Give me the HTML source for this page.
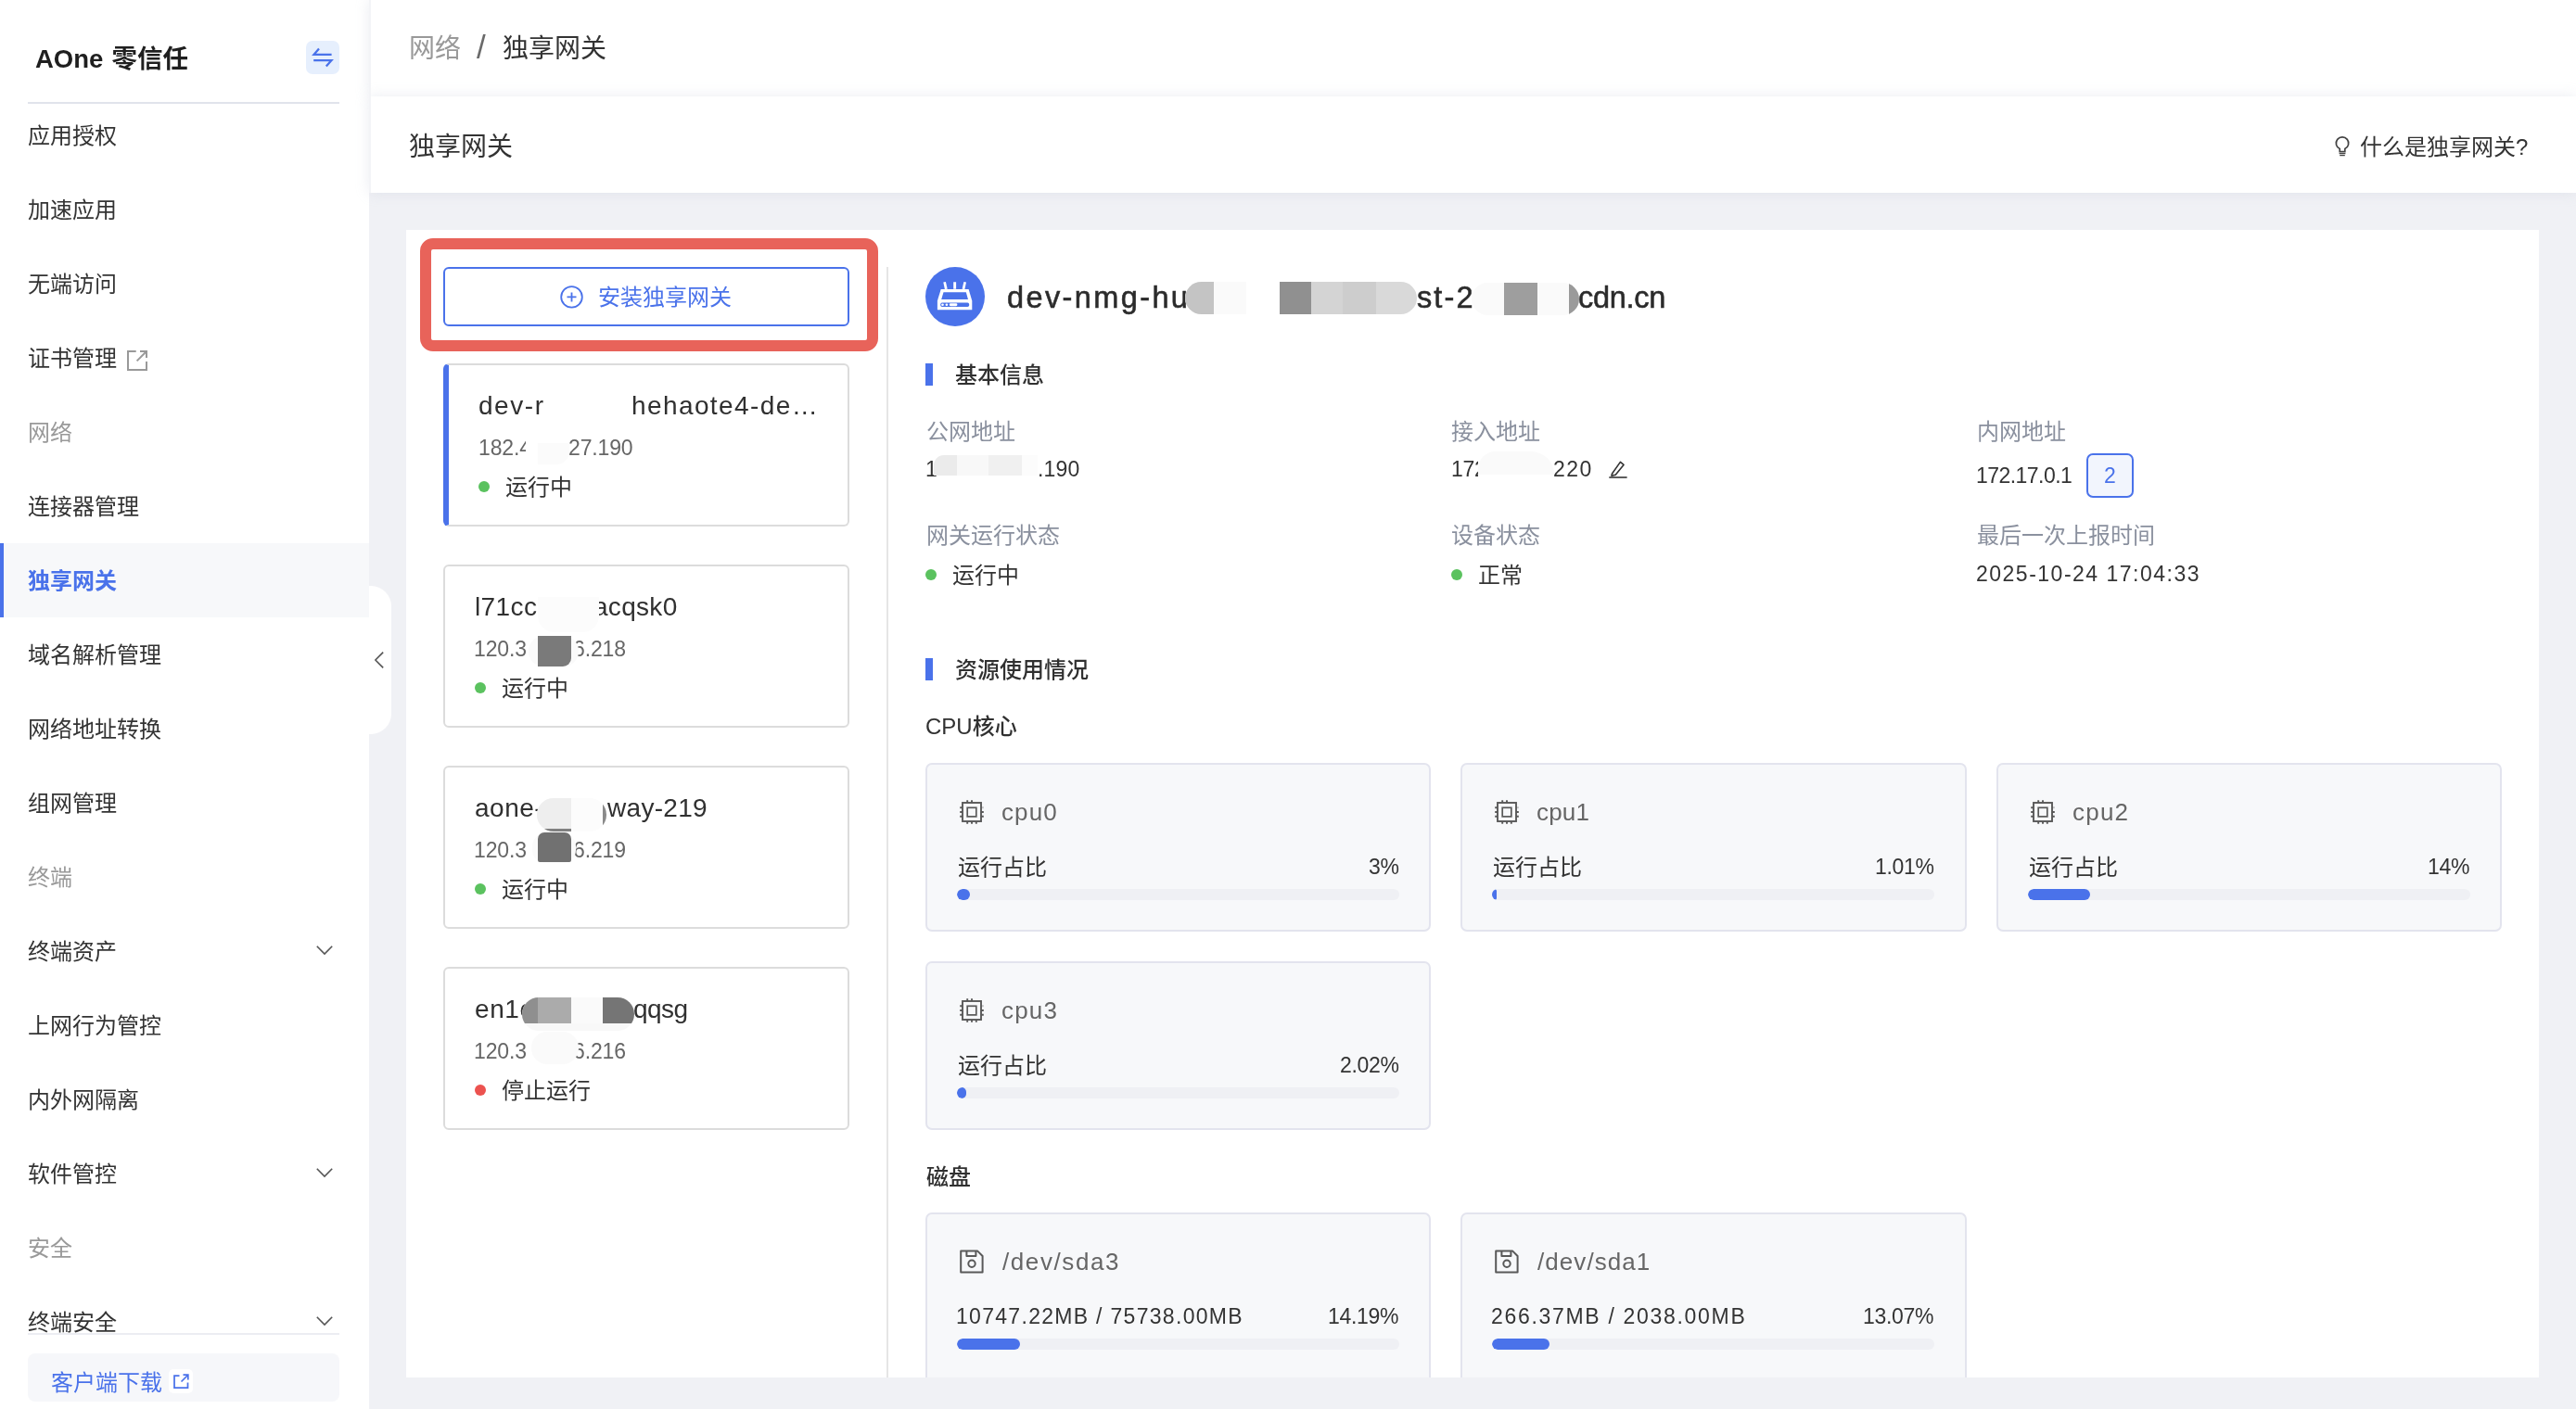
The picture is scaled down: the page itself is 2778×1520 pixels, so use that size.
<!DOCTYPE html>
<html lang="zh-CN"><head><meta charset="utf-8"><title>独享网关</title><style>
*{box-sizing:border-box;margin:0;padding:0}
html,body{width:2778px;height:1520px;overflow:hidden;background:#f0f1f5}
body{position:relative;font-family:"Liberation Sans","Noto Sans CJK SC",sans-serif;color:#333}
.t{position:absolute;white-space:nowrap;will-change:transform}
.b{position:absolute}
svg{position:absolute;overflow:visible}
</style></head><body>
<div class="b" style="left:438px;top:248px;width:2300px;height:1238px;background:#fff;"></div>
<div class="b" style="left:0px;top:0px;width:398px;height:1520px;background:#fff;"></div>
<div class="t" style="left:38px;top:44px;height:40px;line-height:40px;font-size:27.5px;color:#1f1f1f;font-weight:700;word-spacing:1.5px;">AOne 零信任</div>
<div class="b" style="left:330px;top:44px;width:36px;height:36px;background:#e6effd;border-radius:7px;"></div>
<svg style="left:330px;top:44px" width="36" height="36" viewBox="0 0 36 36" fill="none" stroke="#4a72ea" stroke-width="2.3" stroke-linejoin="miter"><path d="M27.6 14.8H8.6L14 8.6"/><path d="M8.2 21.2H27.4L21.8 27.6"/></svg>
<div class="b" style="left:30px;top:110px;width:336px;height:2px;background:#e1e3eb;"></div>
<div class="b" style="left:0px;top:586px;width:398px;height:80px;background:#f7f8fa;"></div>
<div class="b" style="left:0px;top:586px;width:4px;height:80px;background:#4a72ea;"></div>
<div class="t" style="left:30.4px;top:127.45px;height:40px;line-height:40px;font-size:24px;color:#333;">应用授权</div>
<div class="t" style="left:30.4px;top:207.45px;height:40px;line-height:40px;font-size:24px;color:#333;">加速应用</div>
<div class="t" style="left:30.4px;top:287.45px;height:40px;line-height:40px;font-size:24px;color:#333;">无端访问</div>
<div class="t" style="left:30.4px;top:367.45px;height:40px;line-height:40px;font-size:24px;color:#333;">证书管理</div>
<div class="t" style="left:30.4px;top:447.45px;height:40px;line-height:40px;font-size:24px;color:#999;">网络</div>
<div class="t" style="left:30.4px;top:527.45px;height:40px;line-height:40px;font-size:24px;color:#333;">连接器管理</div>
<div class="t" style="left:30.4px;top:607.45px;height:40px;line-height:40px;font-size:24px;color:#4a72ea;font-weight:700;">独享网关</div>
<div class="t" style="left:30.4px;top:687.45px;height:40px;line-height:40px;font-size:24px;color:#333;">域名解析管理</div>
<div class="t" style="left:30.4px;top:767.45px;height:40px;line-height:40px;font-size:24px;color:#333;">网络地址转换</div>
<div class="t" style="left:30.4px;top:847.45px;height:40px;line-height:40px;font-size:24px;color:#333;">组网管理</div>
<div class="t" style="left:30.4px;top:927.45px;height:40px;line-height:40px;font-size:24px;color:#999;">终端</div>
<div class="t" style="left:30.4px;top:1007.45px;height:40px;line-height:40px;font-size:24px;color:#333;">终端资产</div>
<svg style="left:341.4px;top:1020.15px" width="18" height="10" viewBox="0 0 18 10" fill="none" stroke="#555" stroke-width="1.6"><path d="M0.8 0.8L9 9L17.2 0.8"/></svg>
<div class="t" style="left:30.4px;top:1087.45px;height:40px;line-height:40px;font-size:24px;color:#333;">上网行为管控</div>
<div class="t" style="left:30.4px;top:1167.45px;height:40px;line-height:40px;font-size:24px;color:#333;">内外网隔离</div>
<div class="t" style="left:30.4px;top:1247.45px;height:40px;line-height:40px;font-size:24px;color:#333;">软件管控</div>
<svg style="left:341.4px;top:1260.15px" width="18" height="10" viewBox="0 0 18 10" fill="none" stroke="#555" stroke-width="1.6"><path d="M0.8 0.8L9 9L17.2 0.8"/></svg>
<div class="t" style="left:30.4px;top:1327.45px;height:40px;line-height:40px;font-size:24px;color:#999;">安全</div>
<div class="t" style="left:30.4px;top:1407.45px;height:40px;line-height:40px;font-size:24px;color:#333;">终端安全</div>
<svg style="left:341.4px;top:1420.15px" width="18" height="10" viewBox="0 0 18 10" fill="none" stroke="#555" stroke-width="1.6"><path d="M0.8 0.8L9 9L17.2 0.8"/></svg>
<svg style="left:137px;top:378px" width="22" height="22" viewBox="0 0 22 22" fill="none" stroke="#999" stroke-width="2"><path d="M9.7 1H1V21H21V12"/><path d="M14 1H21V8"/><path d="M21 1L10.6 11.4"/></svg>
<div class="b" style="left:0px;top:1438px;width:382px;height:82px;background:#fff;"></div>
<div class="b" style="left:30px;top:1438px;width:336px;height:2px;background:#ecedf2;"></div>
<div class="b" style="left:30px;top:1460px;width:336px;height:52px;background:#f6f7fa;border-radius:8px;"></div>
<div class="t" style="left:55px;top:1471.7px;height:40px;line-height:40px;font-size:24px;color:#4a72ea;">客户端下载</div>
<div class="b" style="left:182px;top:1477px;width:26px;height:26px;background:#fff;border-radius:5px;"></div>
<svg style="left:187px;top:1482px" width="17" height="16" viewBox="0 0 17 16" fill="none" stroke="#4a72ea" stroke-width="1.75"><path d="M6.5 2H1V15H15.5V9.5"/><path d="M10.5 1.2H15.8V6.5"/><path d="M15.5 1.5L8.5 8.5"/></svg>
<div class="b" style="left:398px;top:632px;width:24px;height:160px;background:#fff;border-radius:0 22px 22px 0;"></div>
<svg style="left:404px;top:703px" width="10" height="18" viewBox="0 0 10 18" fill="none" stroke="#555" stroke-width="1.6"><path d="M9.2 0.6L0.9 9L9.2 17.4"/></svg>
<div class="b" style="left:398px;top:0px;width:2380px;height:104px;background:#fff;box-shadow:0 0 14px rgba(170,178,200,0.24);"></div>
<div class="b" style="left:398px;top:104px;width:2380px;height:104px;background:#fff;box-shadow:0 0 14px rgba(170,178,200,0.24);"></div>
<div class="b" style="left:398px;top:0px;width:2px;height:208px;background:#f3f4f7;"></div>
<div class="t" style="left:440.6px;top:33.4px;height:40px;line-height:40px;font-size:28px;color:#999;">网络</div>
<div class="t" style="left:513.5px;top:27.47px;height:48px;line-height:48px;font-size:35px;color:#6a6a6a;">/</div>
<div class="t" style="left:542.3px;top:33.4px;height:40px;line-height:40px;font-size:28px;color:#333;">独享网关</div>
<div class="t" style="left:440.6px;top:139px;height:40px;line-height:40px;font-size:28px;color:#333;">独享网关</div>
<div class="t" style="right:51.7px;top:138.5px;height:40px;line-height:40px;font-size:24px;color:#333;">什么是独享网关?</div>
<svg style="left:2517px;top:146px" width="18" height="24" viewBox="0 0 18 24" fill="none" stroke="#444" stroke-width="1.7"><path d="M6.2 17.6V14.6A6.7 6.7 0 1 1 11.8 14.6V17.6Z"/><path d="M5.6 19.7H12.4M6.2 21.7H11.8" stroke-width="1.3"/></svg>
<div class="b" style="left:453px;top:257px;width:494px;height:122.4px;border:12px solid #e8635a;border-radius:14px;"></div>
<div class="b" style="left:478px;top:288px;width:438px;height:64px;border:2px solid #4a72ea;border-radius:6px;background:#fff;"></div>
<svg style="left:604.2px;top:308px" width="25" height="25" viewBox="0 0 25 25" fill="none" stroke="#4a72ea" stroke-width="1.8"><circle cx="12.5" cy="12.4" r="11.3"/><path d="M12.5 7.4V17.4M7.5 12.4H17.5"/></svg>
<div class="t" style="left:645.2px;top:300.7px;height:40px;line-height:40px;font-size:24px;color:#4a72ea;">安装独享网关</div>
<div class="b" style="left:956px;top:288px;width:2px;height:1198px;background:#e5e5e5;"></div>
<div class="b" style="left:478px;top:392px;width:438px;height:176px;border:2px solid #dcdcdc;border-left:6px solid #4a72ea;border-radius:6px;background:#fff;"></div>
<div class="b" style="left:478px;top:609px;width:438px;height:176px;border:2px solid #dcdcdc;border-radius:6px;background:#fff;"></div>
<div class="b" style="left:478px;top:826px;width:438px;height:176px;border:2px solid #dcdcdc;border-radius:6px;background:#fff;"></div>
<div class="b" style="left:478px;top:1043px;width:438px;height:176px;border:2px solid #dcdcdc;border-radius:6px;background:#fff;"></div>
<div class="t" style="left:515.62px;top:418.3px;height:40px;line-height:40px;font-size:28px;color:#303030;letter-spacing:1.54px;">dev-r</div>
<div class="t" style="left:681.27px;top:418.3px;height:40px;line-height:40px;font-size:28px;color:#303030;letter-spacing:1.4px;">hehaote4-de…</div>
<div class="t" style="left:612.65px;top:463.03px;height:40px;line-height:40px;font-size:23px;color:#666;letter-spacing:-0.14px;">27.190</div>
<div class="t" style="left:516.15px;top:463.03px;height:40px;line-height:40px;font-size:23px;color:#666;letter-spacing:-0.14px;">182.4</div>
<div class="b" style="left:566.5px;top:473px;width:14px;height:20px;background:#fff;border-radius:0;"></div>
<div class="b" style="left:580px;top:477.5px;width:34px;height:23.5px;background:#fbfbfb;border-radius:0 0 14px 0;"></div>
<div class="b" style="left:516px;top:519px;width:12.2px;height:12.2px;background:#5bc25f;border-radius:50%;"></div>
<div class="t" style="left:544.6px;top:505.7px;height:40px;line-height:40px;font-size:24px;color:#333;">运行中</div>
<div class="t" style="left:511.82px;top:635.4px;height:40px;line-height:40px;font-size:28px;color:#303030;letter-spacing:0.4px;">l71cc</div>
<div class="t" style="left:639.89px;top:635.4px;height:40px;line-height:40px;font-size:28px;color:#303030;letter-spacing:0.3px;">acqsk0</div>
<div class="t" style="left:511.45px;top:680.03px;height:40px;line-height:40px;font-size:23px;color:#666;letter-spacing:-0.14px;">120.3</div>
<div class="t" style="left:617.99px;top:680.03px;height:40px;line-height:40px;font-size:23px;color:#666;letter-spacing:-0.14px;">6.218</div>
<div class="b" style="left:580px;top:644px;width:66px;height:38px;background:#fcfcfc;border-radius:0 0 18px 18px;"></div>
<div class="b" style="left:570px;top:686px;width:54px;height:33px;background:#fafafa;border-radius:16px;"></div>
<div class="b" style="left:580px;top:686px;width:36.2px;height:32.6px;background:#7a7a7a;border-radius:0 0 9px 0;"></div>
<div class="b" style="left:512px;top:736px;width:12.2px;height:12.2px;background:#5bc25f;border-radius:50%;"></div>
<div class="t" style="left:540.6px;top:722.7px;height:40px;line-height:40px;font-size:24px;color:#333;">运行中</div>
<div class="t" style="left:512.02px;top:852.3px;height:40px;line-height:40px;font-size:28px;color:#303030;letter-spacing:0.5px;">aone-</div>
<div class="t" style="left:654.56px;top:852.3px;height:40px;line-height:40px;font-size:28px;color:#303030;letter-spacing:0.3px;">way-219</div>
<div class="t" style="left:511.45px;top:897.03px;height:40px;line-height:40px;font-size:23px;color:#666;letter-spacing:-0.14px;">120.3</div>
<div class="t" style="left:618.08px;top:897.03px;height:40px;line-height:40px;font-size:23px;color:#666;letter-spacing:-0.14px;">6.219</div>
<div class="b" style="left:579.2px;top:861px;width:75.3px;height:35.7px;border-radius:18px;overflow:hidden;background:#fcfcfc;"><div style="position:absolute;left:0;top:0;width:36.5px;height:36px;background:#eee"></div><div style="position:absolute;left:8px;top:33px;width:28.5px;height:3px;background:#808080"></div><div style="position:absolute;left:70.6px;top:0;width:5px;height:36px;background:#8a8a8a"></div></div>
<div class="b" style="left:574px;top:899px;width:47px;height:32px;background:#fbfbfb;border-radius:14px;"></div>
<div class="b" style="left:580px;top:898.2px;width:36.2px;height:31.8px;background:#717171;border-radius:7px 7px 2px 2px;"></div>
<div class="b" style="left:512px;top:953px;width:12.2px;height:12.2px;background:#5bc25f;border-radius:50%;"></div>
<div class="t" style="left:540.6px;top:939.7px;height:40px;line-height:40px;font-size:24px;color:#333;">运行中</div>
<div class="t" style="left:511.52px;top:1069.3px;height:40px;line-height:40px;font-size:28px;color:#303030;letter-spacing:0.6px;">en1c</div>
<div class="t" style="left:682.82px;top:1069.3px;height:40px;line-height:40px;font-size:28px;color:#303030;letter-spacing:-0.58px;">qqsg</div>
<div class="t" style="left:511.45px;top:1114.03px;height:40px;line-height:40px;font-size:23px;color:#666;letter-spacing:-0.14px;">120.3</div>
<div class="t" style="left:618.02px;top:1114.03px;height:40px;line-height:40px;font-size:23px;color:#666;letter-spacing:-0.14px;">6.216</div>
<div class="b" style="left:562.9px;top:1075.8px;width:121.1px;height:36px;border-radius:18px;overflow:hidden;background:#f8f8f8;"><div style="position:absolute;left:0;top:0;width:17.1px;height:28.2px;background:#8f8f8f"></div><div style="position:absolute;left:17.1px;top:0;width:35.7px;height:28.2px;background:#ababab"></div><div style="position:absolute;left:52.8px;top:0;width:34.1px;height:28.2px;background:#fafafa"></div><div style="position:absolute;left:86.9px;top:0;width:34.3px;height:28.2px;background:#757575"></div></div>
<div class="b" style="left:573px;top:1112.6px;width:51px;height:35px;background:#fafafa;border-radius:17px;"></div>
<div class="b" style="left:512px;top:1170px;width:12.2px;height:12.2px;background:#ec524f;border-radius:50%;"></div>
<div class="t" style="left:540.6px;top:1156.7px;height:40px;line-height:40px;font-size:24px;color:#333;">停止运行</div>
<div class="b" style="left:998.2px;top:288px;width:64px;height:64px;background:#4a72ea;border-radius:50%;"></div>
<svg style="left:998.2px;top:288px" width="64" height="64" viewBox="0 0 64 64"><g fill="#fff"><path d="M16.7 24H46.6L50.3 36.5V46.2H12.9V36.5Z"/><path d="M19.3 16.6l2.6-.5 1.8 7.6-2.8.4z"/><path d="M30.2 16.2h2.9v7.6h-2.9z"/><path d="M41.4 16.1l2.6.5-1.6 7.5-2.8-.4z"/></g><g fill="#4a72ea"><path d="M19.5 27.2H43.8L46 34.9H17.2Z"/><rect x="16.3" y="38.6" width="30.8" height="4.3" rx="1.6"/></g><g fill="#fff"><circle cx="18.5" cy="40.75" r="1.35"/><circle cx="22.9" cy="40.75" r="1.35"/><rect x="25.8" y="39.3" width="8.6" height="2.9" rx="1.4"/></g></svg>
<div class="t" style="left:1085.63px;top:297.34px;height:48px;line-height:48px;font-size:32.5px;color:#2b2b2b;letter-spacing:2.39px;-webkit-text-stroke:0.55px #2b2b2b;">dev-nmg-hu</div>
<div class="t" style="left:1527.59px;top:297.34px;height:48px;line-height:48px;font-size:32.5px;color:#2b2b2b;letter-spacing:2.12px;-webkit-text-stroke:0.55px #2b2b2b;">st-2</div>
<div class="t" style="left:1702.13px;top:297.34px;height:48px;line-height:48px;font-size:32.5px;color:#2b2b2b;letter-spacing:-0.31px;-webkit-text-stroke:0.55px #2b2b2b;">cdn.cn</div>
<div class="b" style="left:1278.4px;top:303.6px;width:65.2px;height:35px;border-radius:17.5px 0 0 17.5px;overflow:hidden;background:#fafafa;"><div style="position:absolute;left:0;top:0;width:31px;height:35px;background:#c4c4c4"></div></div>
<div class="b" style="left:1380px;top:303.6px;width:148px;height:35px;border-radius:0 17.5px 17.5px 0;overflow:hidden;background:#d9d9d9;"><div style="position:absolute;left:0;top:0;width:34px;height:35px;background:#909090"></div><div style="position:absolute;left:34px;top:0;width:34px;height:35px;background:#d4d4d4"></div><div style="position:absolute;left:68px;top:0;width:36px;height:35px;background:#cdcdcd"></div></div>
<div class="b" style="left:1586.5px;top:305px;width:116.5px;height:35px;border-radius:17.5px;overflow:hidden;background:#fafafa;"><div style="position:absolute;left:35.5px;top:0;width:36px;height:35px;background:#9e9e9e"></div><div style="position:absolute;left:105.5px;top:0;width:11px;height:35px;background:#9a9a9a"></div></div>
<div class="b" style="left:998px;top:392px;width:7.8px;height:23.8px;background:#4a72ea;"></div>
<div class="t" style="left:1030.4px;top:384.5px;height:40px;line-height:40px;font-size:24px;color:#303030;font-weight:500;">基本信息</div>
<div class="t" style="left:998.5px;top:445.6px;height:40px;line-height:40px;font-size:24px;color:#8a909e;">公网地址</div>
<div class="t" style="left:1564.7px;top:445.5px;height:40px;line-height:40px;font-size:24px;color:#8a909e;">接入地址</div>
<div class="t" style="left:2132.2px;top:445.5px;height:40px;line-height:40px;font-size:24px;color:#8a909e;">内网地址</div>
<div class="t" style="left:997.75px;top:485.93px;height:40px;line-height:40px;font-size:23px;color:#333;">1</div>
<div class="t" style="left:1119.11px;top:485.93px;height:40px;line-height:40px;font-size:23px;color:#333;letter-spacing:0.21px;">.190</div>
<div class="b" style="left:1006.8px;top:491px;width:112.2px;height:21.5px;border-radius:11px 0 0 0;overflow:hidden;background:#fcfcfc;"><div style="position:absolute;left:0;top:0;width:25.2px;height:22px;background:#ebebeb"></div><div style="position:absolute;left:25.2px;top:0;width:34.1px;height:22px;background:#f8f8f8"></div><div style="position:absolute;left:59.3px;top:0;width:36px;height:22px;background:#f0f0f0"></div></div>
<div class="t" style="left:1564.55px;top:485.83px;height:40px;line-height:40px;font-size:23px;color:#333;letter-spacing:-0.35px;">172</div>
<div class="t" style="left:1675.45px;top:485.83px;height:40px;line-height:40px;font-size:23px;color:#333;letter-spacing:1.44px;">220</div>
<div class="b" style="left:1594.3px;top:487.4px;width:81.5px;height:28px;background:#fff;"></div>
<div class="b" style="left:1594.3px;top:487.4px;width:81.5px;height:25px;border-radius:24px 32px 0 0;background:#fafafa;"></div>
<svg style="left:1735px;top:496.5px" width="20" height="20" viewBox="0 0 20 20" fill="none" stroke="#333" stroke-width="1.6" stroke-linejoin="round"><path d="M3.5 14L12.4 1.4L16 4.4L7.2 15.2L2.9 16.1Z"/><path d="M0.3 18H19.6"/></svg>
<div class="t" style="left:2130.75px;top:493.03px;height:40px;line-height:40px;font-size:23px;color:#333;letter-spacing:-0.55px;">172.17.0.1</div>
<div class="b" style="left:2250.1px;top:489.4px;width:50.6px;height:47.2px;border:2px solid #4a72ea;border-radius:7px;background:#f2f5fd;"></div>
<div class="t" style="left:2268.65px;top:493.03px;height:40px;line-height:40px;font-size:23px;color:#4a72ea;">2</div>
<div class="t" style="left:998.5px;top:558.4px;height:40px;line-height:40px;font-size:24px;color:#8a909e;">网关运行状态</div>
<div class="t" style="left:1564.7px;top:558.4px;height:40px;line-height:40px;font-size:24px;color:#8a909e;">设备状态</div>
<div class="t" style="left:2132.2px;top:558.4px;height:40px;line-height:40px;font-size:24px;color:#8a909e;">最后一次上报时间</div>
<div class="b" style="left:998px;top:613.8px;width:12.2px;height:12.2px;background:#5bc25f;border-radius:50%;"></div>
<div class="t" style="left:1026.6px;top:600.7px;height:40px;line-height:40px;font-size:24px;color:#333;">运行中</div>
<div class="b" style="left:1565px;top:613.8px;width:12.2px;height:12.2px;background:#5bc25f;border-radius:50%;"></div>
<div class="t" style="left:1593.8px;top:600.7px;height:40px;line-height:40px;font-size:24px;color:#333;">正常</div>
<div class="t" style="left:2131.35px;top:598.83px;height:40px;line-height:40px;font-size:23px;color:#333;letter-spacing:1.5px;">2025-10-24 17:04:33</div>
<div class="b" style="left:998px;top:710px;width:7.8px;height:23.8px;background:#4a72ea;"></div>
<div class="t" style="left:1030.4px;top:702.5px;height:40px;line-height:40px;font-size:24px;color:#303030;font-weight:500;">资源使用情况</div>
<div class="t" style="left:998.3px;top:763.7px;height:40px;line-height:40px;font-size:24px;color:#303030;font-weight:500;">CPU核心</div>
<div class="t" style="left:998.5px;top:1249.5px;height:40px;line-height:40px;font-size:24px;color:#303030;font-weight:500;">磁盘</div>
<div class="b" style="left:998px;top:823px;width:545px;height:182px;border:2px solid #e3e4ee;border-radius:7px;background:#f7f8fa;"></div>
<svg style="left:1034.9px;top:862.6px" width="26" height="26" viewBox="0 0 26 26" fill="none" stroke="#595959" stroke-width="1.9"><rect x="3" y="3" width="20" height="20"/><rect x="8.2" y="8.3" width="9.6" height="9.6" stroke-width="1.7"/><path d="M8.2 23V25.8M0.2 8.2H3"/><path d="M13 23V25.8M0.2 13H3"/><path d="M17.8 23V25.8M0.2 17.8H3"/><path d="M8.2 0.2V3M13 0.2V3M23 13H25.8M23 17.8H25.8"/><path d="M23 8.2H25.8" stroke-opacity="0.35"/></svg>
<div class="t" style="left:1079.71px;top:855.99px;height:40px;line-height:40px;font-size:26px;color:#666;letter-spacing:1.11px;">cpu0</div>
<div class="t" style="left:1032.7px;top:915.6px;height:40px;line-height:40px;font-size:24px;color:#333;">运行占比</div>
<div class="t" style="left:1475.67px;top:915.23px;height:40px;line-height:40px;font-size:23px;color:#333;letter-spacing:-0.3px;">3%</div>
<div class="b" style="left:1032px;top:959px;width:477px;height:12px;background:#eff0f4;border-radius:6px;overflow:hidden;"><div style="width:14.3px;height:12px;background:#4a72ea;border-radius:6px"></div></div>
<div class="b" style="left:1575px;top:823px;width:546px;height:182px;border:2px solid #e3e4ee;border-radius:7px;background:#f7f8fa;"></div>
<svg style="left:1611.9px;top:862.6px" width="26" height="26" viewBox="0 0 26 26" fill="none" stroke="#595959" stroke-width="1.9"><rect x="3" y="3" width="20" height="20"/><rect x="8.2" y="8.3" width="9.6" height="9.6" stroke-width="1.7"/><path d="M8.2 23V25.8M0.2 8.2H3"/><path d="M13 23V25.8M0.2 13H3"/><path d="M17.8 23V25.8M0.2 17.8H3"/><path d="M8.2 0.2V3M13 0.2V3M23 13H25.8M23 17.8H25.8"/><path d="M23 8.2H25.8" stroke-opacity="0.35"/></svg>
<div class="t" style="left:1656.71px;top:855.99px;height:40px;line-height:40px;font-size:26px;color:#666;letter-spacing:0.16px;">cpu1</div>
<div class="t" style="left:1609.7px;top:915.6px;height:40px;line-height:40px;font-size:24px;color:#333;">运行占比</div>
<div class="t" style="left:2021.6px;top:915.23px;height:40px;line-height:40px;font-size:23px;color:#333;letter-spacing:-0.3px;">1.01%</div>
<div class="b" style="left:1609px;top:959px;width:477px;height:12px;background:#eff0f4;border-radius:6px;overflow:hidden;"><div style="width:4.8px;height:12px;background:#4a72ea;border-radius:6px"></div></div>
<div class="b" style="left:2153px;top:823px;width:545px;height:182px;border:2px solid #e3e4ee;border-radius:7px;background:#f7f8fa;"></div>
<svg style="left:2189.9px;top:862.6px" width="26" height="26" viewBox="0 0 26 26" fill="none" stroke="#595959" stroke-width="1.9"><rect x="3" y="3" width="20" height="20"/><rect x="8.2" y="8.3" width="9.6" height="9.6" stroke-width="1.7"/><path d="M8.2 23V25.8M0.2 8.2H3"/><path d="M13 23V25.8M0.2 13H3"/><path d="M17.8 23V25.8M0.2 17.8H3"/><path d="M8.2 0.2V3M13 0.2V3M23 13H25.8M23 17.8H25.8"/><path d="M23 8.2H25.8" stroke-opacity="0.35"/></svg>
<div class="t" style="left:2234.71px;top:855.99px;height:40px;line-height:40px;font-size:26px;color:#666;letter-spacing:1.21px;">cpu2</div>
<div class="t" style="left:2187.7px;top:915.6px;height:40px;line-height:40px;font-size:24px;color:#333;">运行占比</div>
<div class="t" style="left:2618.18px;top:915.23px;height:40px;line-height:40px;font-size:23px;color:#333;letter-spacing:-0.3px;">14%</div>
<div class="b" style="left:2187px;top:959px;width:477px;height:12px;background:#eff0f4;border-radius:6px;overflow:hidden;"><div style="width:66.8px;height:12px;background:#4a72ea;border-radius:6px"></div></div>
<div class="b" style="left:998px;top:1037px;width:545px;height:182px;border:2px solid #e3e4ee;border-radius:7px;background:#f7f8fa;"></div>
<svg style="left:1034.9px;top:1076.6px" width="26" height="26" viewBox="0 0 26 26" fill="none" stroke="#595959" stroke-width="1.9"><rect x="3" y="3" width="20" height="20"/><rect x="8.2" y="8.3" width="9.6" height="9.6" stroke-width="1.7"/><path d="M8.2 23V25.8M0.2 8.2H3"/><path d="M13 23V25.8M0.2 13H3"/><path d="M17.8 23V25.8M0.2 17.8H3"/><path d="M8.2 0.2V3M13 0.2V3M23 13H25.8M23 17.8H25.8"/><path d="M23 8.2H25.8" stroke-opacity="0.35"/></svg>
<div class="t" style="left:1079.71px;top:1069.99px;height:40px;line-height:40px;font-size:26px;color:#666;letter-spacing:1.16px;">cpu3</div>
<div class="t" style="left:1032.7px;top:1129.6px;height:40px;line-height:40px;font-size:24px;color:#333;">运行占比</div>
<div class="t" style="left:1444.6px;top:1129.23px;height:40px;line-height:40px;font-size:23px;color:#333;letter-spacing:-0.3px;">2.02%</div>
<div class="b" style="left:1032px;top:1173px;width:477px;height:12px;background:#eff0f4;border-radius:6px;overflow:hidden;"><div style="width:9.6px;height:12px;background:#4a72ea;border-radius:6px"></div></div>
<div class="b" style="left:998px;top:1308px;width:545px;height:178px;border:2px solid #e3e4ee;border-bottom:none;border-radius:7px 7px 0 0;background:#f7f8fa;"></div>
<svg style="left:1035.2px;top:1348.1px" width="26" height="26" viewBox="0 0 26 26" fill="none" stroke="#595959" stroke-width="2" stroke-linejoin="round"><path d="M1.2 1.4H19L24.6 7V24.6H1.2Z"/><path d="M7.4 1.6V7H17.4V1.6"/><circle cx="13" cy="15.3" r="3.7"/></svg>
<div class="t" style="left:1080.8px;top:1340.99px;height:40px;line-height:40px;font-size:26px;color:#666;letter-spacing:1.59px;">/dev/sda3</div>
<div class="t" style="left:1030.85px;top:1400.23px;height:40px;line-height:40px;font-size:23px;color:#333;letter-spacing:1.3px;">10747.22MB / 75738.00MB</div>
<div class="t" style="left:1432.11px;top:1400.23px;height:40px;line-height:40px;font-size:23px;color:#333;letter-spacing:-0.3px;">14.19%</div>
<div class="b" style="left:1032px;top:1444px;width:477px;height:12px;background:#eff0f4;border-radius:6px;overflow:hidden;"><div style="width:67.7px;height:12px;background:#4a72ea;border-radius:6px"></div></div>
<div class="b" style="left:1575px;top:1308px;width:546px;height:178px;border:2px solid #e3e4ee;border-bottom:none;border-radius:7px 7px 0 0;background:#f7f8fa;"></div>
<svg style="left:1612.2px;top:1348.1px" width="26" height="26" viewBox="0 0 26 26" fill="none" stroke="#595959" stroke-width="2" stroke-linejoin="round"><path d="M1.2 1.4H19L24.6 7V24.6H1.2Z"/><path d="M7.4 1.6V7H17.4V1.6"/><circle cx="13" cy="15.3" r="3.7"/></svg>
<div class="t" style="left:1657.8px;top:1340.99px;height:40px;line-height:40px;font-size:26px;color:#666;letter-spacing:1.06px;">/dev/sda1</div>
<div class="t" style="left:1608.45px;top:1400.23px;height:40px;line-height:40px;font-size:23px;color:#333;letter-spacing:1.69px;">266.37MB / 2038.00MB</div>
<div class="t" style="left:2009.11px;top:1400.23px;height:40px;line-height:40px;font-size:23px;color:#333;letter-spacing:-0.3px;">13.07%</div>
<div class="b" style="left:1609px;top:1444px;width:477px;height:12px;background:#eff0f4;border-radius:6px;overflow:hidden;"><div style="width:62.3px;height:12px;background:#4a72ea;border-radius:6px"></div></div>
</body></html>
